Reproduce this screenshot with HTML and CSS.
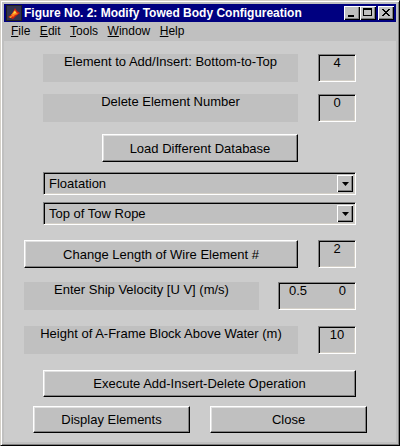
FILE: index.html
```html
<!DOCTYPE html>
<html>
<head>
<meta charset="utf-8">
<link rel="stylesheet" href="styles.css">
</head>
<body>
<div class="window">
  <div class="titlebar">
    <svg class="appicon" width="16" height="16" viewBox="0 0 16 16">
      <rect x="0" y="0" width="16" height="16" fill="#202020"/>
      <rect x="1" y="1" width="14" height="14" fill="#34344e"/>
      <path d="M2 12 L6 9 L9 3 L11 6 L14 8 L10 11 L7 14 Z" fill="#d02010"/>
      <path d="M5 10 L8 6 L10 7 L12 9 L9 10 L7 12 Z" fill="#ff8020"/>
      <path d="M7 9 L9 5 L10 8 Z" fill="#ffe040"/>
      <path d="M3 12 L6 11 L5 13 Z" fill="#ffd030"/>
    </svg>
    <span class="title">Figure No. 2: Modify Towed Body Configureation</span>
    <div class="tbuttons">
      <span class="tbtn"><svg width="16" height="14" viewBox="0 0 16 14"><rect x="4" y="9" width="6" height="2" fill="#000"/></svg></span>
      <span class="tbtn"><svg width="16" height="14" viewBox="0 0 16 14"><rect x="3.5" y="2.5" width="8" height="7" fill="none" stroke="#000"/><rect x="3" y="2" width="9" height="2" fill="#000"/></svg></span>
      <span class="tbtn close"><svg width="16" height="14" viewBox="0 0 16 14"><path d="M4 3 L11 10 M5 3 L12 10 M11 3 L4 10 M12 3 L5 10" stroke="#000" stroke-width="1"/></svg></span>
    </div>
  </div>
  <div class="menubar">
    <span class="menu"><u>F</u>ile</span>
    <span class="menu"><u>E</u>dit</span>
    <span class="menu"><u>T</u>ools</span>
    <span class="menu"><u>W</u>indow</span>
    <span class="menu"><u>H</u>elp</span>
  </div>
  <div class="client">
    <div class="row r1">
      <div class="label w255">Element to Add/Insert: Bottom-to-Top</div>
      <div class="edit w38">4</div>
    </div>
    <div class="row r2">
      <div class="label w255">Delete Element Number</div>
      <div class="edit w38">0</div>
    </div>
    <div class="row r3">
      <div class="button w196">Load Different Database</div>
    </div>
    <div class="row r4">
      <div class="select"><span class="seltext">Floatation</span><span class="arrow"><svg width="7" height="4" viewBox="0 0 7 4"><path d="M0 0 H7 L3.5 4 Z" fill="#000"/></svg></span></div>
    </div>
    <div class="row r5">
      <div class="select"><span class="seltext">Top of Tow Rope</span><span class="arrow"><svg width="7" height="4" viewBox="0 0 7 4"><path d="M0 0 H7 L3.5 4 Z" fill="#000"/></svg></span></div>
    </div>
    <div class="row r6">
      <div class="button w274">Change Length of Wire Element #</div>
      <div class="edit w38">2</div>
    </div>
    <div class="row r7">
      <div class="label w235">Enter Ship Velocity [U V] (m/s)</div>
      <div class="edit w78 pair"><span>0.5</span><span>0</span></div>
    </div>
    <div class="row r8">
      <div class="label w274">Height of A-Frame Block Above Water (m)</div>
      <div class="edit w38">10</div>
    </div>
    <div class="row r9">
      <div class="button w313 h27">Execute Add-Insert-Delete Operation</div>
    </div>
    <div class="row r10">
      <div class="button w157 h27">Display Elements</div>
      <div class="button w157 h27">Close</div>
    </div>
  </div>
</div>
</body>
</html>
```

FILE: styles.css
```css
html, body {
  margin: 0;
  padding: 0;
  background: #c0c0c0;
}
body {
  font-family: "Liberation Sans", Arial, sans-serif;
  font-size: 13px;
  color: #000;
}
.window {
  width: 400px;
  height: 446px;
  box-sizing: border-box;
  background: #c0c0c0;
  border-top: 1px solid #d4d0c8;
  border-left: 1px solid #d4d0c8;
  border-right: 1px solid #000;
  border-bottom: 1px solid #000;
  box-shadow: inset 1px 1px 0 #fff, inset -1px -1px 0 #808080;
  padding: 3px;
  display: flex;
  flex-direction: column;
}
.titlebar {
  height: 18px;
  background: #000080;
  display: flex;
  align-items: center;
  padding-left: 2px;
  flex: none;
}
.appicon { flex: none; }
.title {
  color: #fff;
  font-weight: bold;
  font-size: 12px;
  margin-left: 2px;
  white-space: nowrap;
}
.tbuttons {
  margin-left: auto;
  display: flex;
  margin-right: 2px;
}
.tbtn {
  width: 16px;
  height: 14px;
  box-sizing: border-box;
  background: #c0c0c0;
  box-shadow: inset 1px 1px 0 #fff, inset -1px -1px 0 #000, inset -2px -2px 0 #808080;
  display: block;
}
.tbtn svg { display: block; }
.tbtn.close { margin-left: 2px; }
.menubar {
  height: 18px;
  display: flex;
  align-items: center;
  font-size: 12px;
  flex: none;
  padding-left: 7px;
  gap: 9.5px;
}
.client {
  flex: 1;
  background: #cccccc;
  border-top: 1px solid #c0c0c0;
  display: flex;
  flex-direction: column;
}
.row {
  display: flex;
  flex: none;
}
.r1 { margin-top: 13px; padding-left: 39px; gap: 20px; }
.r2 { margin-top: 12px; padding-left: 39px; gap: 20px; }
.r3 { margin-top: 12px; padding-left: 98px; }
.r4 { margin-top: 10px; padding-left: 39px; }
.r5 { margin-top: 7px; padding-left: 39px; }
.r6 { margin-top: 15px; padding-left: 20px; gap: 20px; }
.r7 { margin-top: 14px; padding-left: 20px; gap: 19px; }
.r8 { margin-top: 16px; padding-left: 20px; gap: 20px; }
.r9 { margin-top: 16px; padding-left: 39px; }
.r10 { margin-top: 9px; padding-left: 29px; gap: 20px; }

.label {
  height: 28px;
  box-sizing: border-box;
  background: #c0c0c0;
  text-align: center;
  line-height: 16px;
  white-space: nowrap;
}
.edit {
  height: 28px;
  box-sizing: border-box;
  background: #c0c0c0;
  border-top: 1px solid #808080;
  border-left: 1px solid #808080;
  border-right: 1px solid #fff;
  border-bottom: 1px solid #fff;
  box-shadow: inset 1px 1px 0 #000, inset -1px -1px 0 #d4d0c8;
  text-align: center;
  line-height: 14px;
  padding-top: 1px;
}
.edit.pair {
  display: flex;
  justify-content: space-between;
  padding-left: 10px;
  padding-right: 9px;
}
.button {
  height: 28px;
  box-sizing: border-box;
  background: #c0c0c0;
  border-top: 1px solid #fff;
  border-left: 1px solid #fff;
  border-right: 1px solid #000;
  border-bottom: 1px solid #000;
  box-shadow: inset -1px -1px 0 #808080, inset 1px 1px 0 #e0e0e0;
  display: flex;
  align-items: center;
  justify-content: center;
  white-space: nowrap;
}
.h27 { height: 27px; }
.w38 { width: 38px; }
.w78 { width: 78px; }
.w157 { width: 157px; }
.w196 { width: 196px; }
.w235 { width: 235px; }
.w255 { width: 255px; }
.w274 { width: 274px; }
.w313 { width: 313px; }

.select {
  width: 313px;
  height: 23px;
  box-sizing: border-box;
  background: #c0c0c0;
  border-top: 1px solid #808080;
  border-left: 1px solid #808080;
  border-right: 1px solid #fff;
  border-bottom: 1px solid #fff;
  box-shadow: inset 1px 1px 0 #000, inset -1px -1px 0 #d4d0c8;
  display: flex;
  align-items: center;
  padding: 2px;
}
.seltext {
  flex: 1;
  padding-left: 3px;
}
.arrow {
  width: 16px;
  height: 17px;
  box-sizing: border-box;
  background: #c0c0c0;
  box-shadow: inset 1px 1px 0 #fff, inset -1px -1px 0 #000, inset -2px -2px 0 #808080;
  display: flex;
  align-items: center;
  justify-content: center;
}
.arrow svg { display: block; }
```
